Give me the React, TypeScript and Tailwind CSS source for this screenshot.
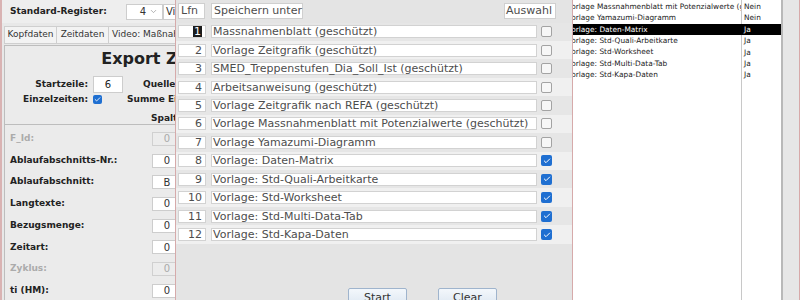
import React from "react";
import { Check, ChevronDown } from "lucide-react";

const templates = [
  { n: 1, name: "Massnahmenblatt (geschützt)", on: false },
  { n: 2, name: "Vorlage Zeitgrafik (geschützt)", on: false },
  { n: 3, name: "SMED_Treppenstufen_Dia_Soll_Ist (geschützt)", on: false },
  { n: 4, name: "Arbeitsanweisung (geschützt)", on: false },
  { n: 5, name: "Vorlage Zeitgrafik nach REFA (geschützt)", on: false },
  { n: 6, name: "Vorlage Massnahmenblatt mit Potenzialwerte (geschützt)", on: false },
  { n: 7, name: "Vorlage Yamazumi-Diagramm", on: false },
  { n: 8, name: "Vorlage: Daten-Matrix", on: true },
  { n: 9, name: "Vorlage: Std-Quali-Arbeitkarte", on: true },
  { n: 10, name: "Vorlage: Std-Worksheet", on: true },
  { n: 11, name: "Vorlage: Std-Multi-Data-Tab", on: true },
  { n: 12, name: "Vorlage: Std-Kapa-Daten", on: true },
];

const listRows = [
  { name: "Vorlage Zeitgrafik nach REFA (geschützt)", val: "Nein" },
  { name: "Vorlage Massnahmenblatt mit Potenzialwerte (geschützt)", val: "Nein" },
  { name: "Vorlage Yamazumi-Diagramm", val: "Nein" },
  { name: "Vorlage: Daten-Matrix", val: "Ja", sel: true },
  { name: "Vorlage: Std-Quali-Arbeitkarte", val: "Ja" },
  { name: "Vorlage: Std-Worksheet", val: "Ja" },
  { name: "Vorlage: Std-Multi-Data-Tab", val: "Ja" },
  { name: "Vorlage: Std-Kapa-Daten", val: "Ja" },
];

const fields = [
  { label: "F_Id:", value: "0", off: true },
  { label: "Ablaufabschnitts-Nr.:", value: "0" },
  { label: "Ablaufabschnitt:", value: "B" },
  { label: "Langtexte:", value: "0" },
  { label: "Bezugsmenge:", value: "0" },
  { label: "Zeitart:", value: "0" },
  { label: "Zyklus:", value: "0", off: true },
  { label: "ti (HM):", value: "0" },
];

const Box = ({ checked }: { checked: boolean }) =>
  checked ? (
    <span className="flex h-[11px] w-[11px] items-center justify-center rounded-[2px] bg-[#1f6fd1]">
      <Check size={8} strokeWidth={3} className="text-white" />
    </span>
  ) : (
    <span className="h-[11px] w-[11px] rounded-[2px] border border-[#a3a3a3] bg-[#f7f7f7]" />
  );

const LeftForm = () => (
  <div className="flex w-[558px] shrink-0 flex-col">
    <div className="flex h-[23px] shrink-0 items-center bg-[#eeeeee]">
      <span className="w-[124px] pl-[8px] text-[9px] font-bold text-[#222]">Standard-Register:</span>
      <div className="flex h-[16px] w-[37px] items-center justify-end gap-[3px] border border-[#cdcdcd] bg-white pr-[4px] text-[10px] text-[#333]">
        <span>4</span>
        <ChevronDown size={9} className="text-[#999]" />
      </div>
      <div className="flex h-[16px] w-[140px] items-center border border-[#cdcdcd] bg-white pl-[2px] text-[10px] text-[#333]">
        Video: Maßnahmen
      </div>
    </div>
    <div className="mt-[3px] flex h-[18px] shrink-0 pl-[2px] text-[9px] text-[#333]">
      <div className="flex w-[53px] items-center justify-center border border-[#cfcfcf] bg-[#f3f3f3]">Kopfdaten</div>
      <div className="flex w-[52px] items-center justify-center border border-l-0 border-[#cfcfcf] bg-[#f3f3f3]">Zeitdaten</div>
      <div className="flex w-[110px] items-center border border-l-0 border-[#cfcfcf] bg-[#f3f3f3] pl-[3px]">Video: Maßnahmen</div>
    </div>
    <div className="ml-[2px] mt-[1px] w-[346px] flex-1 border-l border-t border-[#bdbdbd] bg-[#ebebeb] text-[#222]">
      <div className="h-[26px] text-center text-[16px] font-bold leading-[26px]">Export Zeitdaten</div>
      <div className="mt-[4px] flex h-[17px] items-center text-[9px] font-bold">
        <span className="w-[83px] text-right">Startzeile:</span>
        <span className="ml-[5px] flex h-[17px] w-[30px] items-center justify-center border border-[#cdcdcd] bg-white text-[10px] font-normal">6</span>
        <span className="ml-[20px]">Quelle</span>
      </div>
      <div className="mt-[1px] flex h-[11px] items-center text-[9px] font-bold">
        <span className="w-[83px] text-right">Einzelzeiten:</span>
        <span className="ml-[5px] flex h-[9px] w-[9px] items-center justify-center rounded-[2px] bg-[#1f6fd1]">
          <Check size={7} strokeWidth={3} className="text-white" />
        </span>
        <span className="ml-[25px]">Summe Einzelzeiten</span>
      </div>
      <div className="mt-[7px] h-[12px] pl-[146px] text-[9px] font-bold leading-[12px]">Spalte</div>
      <div className="h-px bg-[#bdbdbd]" />
      <div className="mt-[3px] flex flex-col">
        {fields.map((f) => (
          <div key={f.label} className="flex h-[21.7px] shrink-0 items-center">
            <span className={`w-[147px] pl-[5px] text-[9px] font-bold ${f.off ? "text-[#ababab]" : "text-[#222]"}`}>
              {f.label}
            </span>
            <span
              className={`flex h-[14px] w-[30px] items-center justify-center border text-[10px] ${
                f.off ? "border-[#d0d0d0] bg-[#ececec] text-[#aaa]" : "border-[#cdcdcd] bg-white text-[#333]"
              }`}
            >
              {f.value}
            </span>
          </div>
        ))}
      </div>
    </div>
  </div>
);

const RightList = () => (
  <div className="flex w-[223px] shrink-0 flex-col border-r-2 border-[#b8b8b8] bg-white text-[7.4px] text-[#222]">
    <div className="-mt-[10.7px] flex shrink-0 flex-col">
      {listRows.map((r) => (
        <div key={r.name} className={`flex h-[11.43px] shrink-0 items-center ${r.sel ? "bg-black text-white" : ""}`}>
          <span className={`h-full w-[182px] overflow-hidden whitespace-nowrap border-r pl-[6.7px] leading-[11.43px] ${r.sel ? "border-black" : "border-[#c8c8c8]"}`}>
            {r.name}
          </span>
          <span className="pl-[2px]">{r.val}</span>
        </div>
      ))}
    </div>
    <div className="flex-1">
      <div className="h-full w-[182px] border-r border-[#c8c8c8]" />
    </div>
  </div>
);

const ExportDialog = () => (
  <div className="absolute left-[175px] top-0 flex h-[300px] w-[398px] flex-col border-x border-[#d6aaaa] bg-[#e4e4e4] text-[11px] text-[#4d4d4d]">
    <div className="flex h-[22.5px] shrink-0 items-center pl-[2px] pr-[16px]">
      <span className="flex h-[16px] w-[27px] items-center border border-[#cfcfcf] bg-white pl-[2px]">Lfn</span>
      <span className="ml-[6px] flex h-[16px] w-[92px] items-center border border-[#cfcfcf] bg-white pl-[2px]">Speichern unter</span>
      <span className="ml-auto flex h-[16px] w-[52px] items-center border border-[#cfcfcf] bg-white pl-[1px]">Auswahl</span>
    </div>
    {templates.map((t, i) => (
      <div key={t.n} className={`flex h-[18.45px] shrink-0 items-center pl-[2px] ${i % 2 === 0 ? "bg-[#e6e6e6]" : "bg-[#f0f0f0]"}`}>
        <span className="flex h-[13px] w-[28px] items-center justify-end border border-[#d2d2d2] bg-white pr-[3px] leading-[13px]">
          {t.n === 1 ? <span className="bg-[#1c1c1c] px-[1px] leading-[11px] text-white">1</span> : t.n}
        </span>
        <span className="ml-[5px] h-[13px] w-[326px] whitespace-nowrap border border-[#d2d2d2] bg-white pl-[1px] leading-[11px]">
          {t.name}
        </span>
        <span className="ml-[4px] flex">
          <Box checked={t.on} />
        </span>
      </div>
    ))}
    <div className="mt-[44px] flex shrink-0 gap-[31px] pl-[172px]">
      {["Start", "Clear"].map((b) => (
        <button
          key={b}
          className="h-[22px] w-[59px] rounded-[2px] border border-[#9fb4cd] bg-gradient-to-b from-[#f3f7fb] to-[#d9e4f0] pb-[2px] text-[11px] text-[#333]"
        >
          {b}
        </button>
      ))}
    </div>
  </div>
);

export default function App() {
  return (
    <div className="relative flex h-[300px] w-[800px] overflow-hidden bg-[#e8e8e8] font-['DejaVu_Sans',sans-serif]">
      <div className="w-[2px] shrink-0 bg-[#d9b3b3]" />
      <LeftForm />
      <RightList />
      <div className="w-[16px] shrink-0 bg-[#e6e6e6]" />
      <div className="w-px shrink-0 bg-[#d7a9a9]" />
      <div className="flex-1 bg-[#f2f2f2]" />
      <ExportDialog />
    </div>
  );
}
